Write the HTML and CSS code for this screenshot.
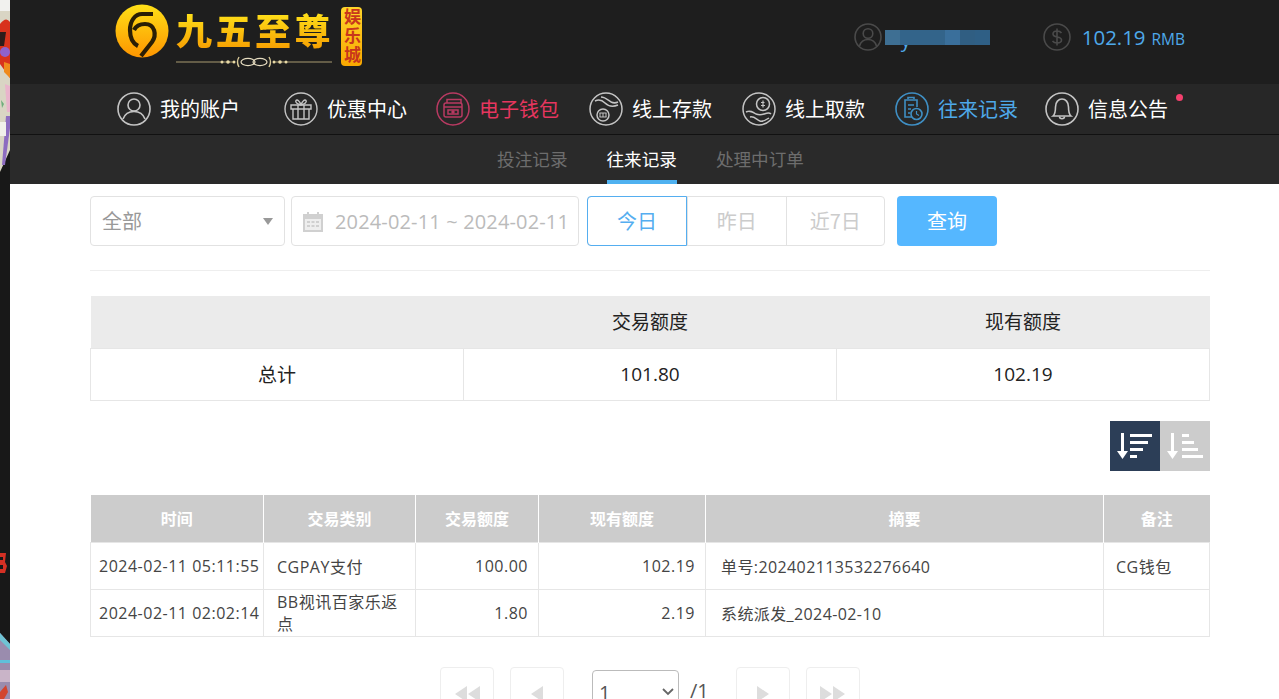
FILE: index.html
```html
<!DOCTYPE html>
<html lang="zh-CN">
<head>
  <meta charset="UTF-8" />
  <title>往来记录</title>
  <meta name="viewport" content="width=device-width, initial-scale=1.0" />
  <link rel="stylesheet" href="styles.css">
</head>
<body>
  <div class="strip">
    <svg width="10" height="699" viewBox="0 0 10 699">
      <rect width="10" height="699" fill="#181818"/>
      <path d="M0 0H10V150L0 172Z" fill="#d9d5c4"/>
      <rect width="10" height="11" fill="#f1f1ee"/>
      <path d="M0 24Q6 16 10 22V78L0 64Z" fill="#d8321c"/>
      <path d="M0 32H6L4 46H0Z" fill="#2e1c1a"/>
      <circle cx="5" cy="52" r="5" fill="#8f62cc"/>
      <path d="M4 62L10 64V78L4 72Z" fill="#ef8a1c"/>
      <path d="M5 84L10 86V112L7 112Z" fill="#e9b4cc"/>
      <path d="M1 100L4 104L2 108Z" fill="#6fae7c"/>
      <path d="M6 116H10V128L5 165H2Z" fill="#8d6cc0"/>
      <path d="M0 122H6V136H0Z" fill="#f1f0ea"/>
      <path d="M0 553H6L5 562L7 566L5 573H0V569H3V565H0V560H3V557H0Z" fill="#d43024"/>
      <path d="M0 633L10 644V699H0Z" fill="#9a8cae"/>
      <path d="M0 633L10 644V650L0 640Z" fill="#6fc3d4"/>
      <rect y="660" width="10" height="3" fill="#5fc0da"/>
      <rect y="670" width="10" height="12" fill="#c9b4c8"/>
      <path d="M0 692L6 685L8 692L4 699H0Z" fill="#d2452f"/>
    </svg>
  </div>

  <div class="main">
    <header class="top">
      <div class="logo">
        <svg class="logo-mark" width="54" height="54" viewBox="0 0 54 54">
          <defs>
            <linearGradient id="gold" x1="0" y1="0" x2="0" y2="1">
              <stop offset="0" stop-color="#ffe017"/>
              <stop offset="1" stop-color="#fd9500"/>
            </linearGradient>
          </defs>
          <circle cx="27" cy="27" r="26.5" fill="url(#gold)"/>
          <path d="M38 10H27C20 10 15 17 15 26C15 33 17 39 23 42" fill="none" stroke="#2a1e05" stroke-width="4.2"/>
          <path d="M26 52L37 38C42 31 40 20 30 20C25 20 21 22 19 26" fill="none" stroke="#2a1e05" stroke-width="4.2"/>
        </svg>
        <div class="logo-body">
          <span class="logo-name">九五至尊</span>
          <svg class="logo-rule" width="156" height="12" viewBox="0 0 156 12">
            <path d="M0 6H58M98 6H156" stroke="#a89a70" stroke-width="1"/>
            <circle cx="46" cy="6" r="1.500" fill="#e8d9a6"/>
            <circle cx="52" cy="6" r="1.800" fill="#e8d9a6"/>
            <circle cx="58" cy="6" r="1.500" fill="#e8d9a6"/>
            <circle cx="98" cy="6" r="1.500" fill="#e8d9a6"/>
            <circle cx="104" cy="6" r="1.800" fill="#e8d9a6"/>
            <circle cx="110" cy="6" r="1.500" fill="#e8d9a6"/>
            <path d="M63 1Q60 6 63 11M93 1Q96 6 93 11" fill="none" stroke="#d8c998" stroke-width="1.400"/>
            <ellipse cx="72" cy="6" rx="7" ry="3.600" fill="none" stroke="#e6dcc0" stroke-width="1.200"/>
            <ellipse cx="84" cy="6" rx="7" ry="3.600" fill="none" stroke="#e6dcc0" stroke-width="1.200"/>
          </svg>
        </div>
        <span class="logo-tag">娱乐城</span>
      </div>
      <div class="account">
        <svg class="acc-icon" width="28" height="28" viewBox="0 0 28 28" fill="none" stroke="#4a4a4a" stroke-width="1.600">
          <circle cx="14" cy="14" r="13"/>
          <circle cx="14" cy="10.500" r="4.800"/>
          <path d="M5.500 23C7 18 10 16.500 14 16.500S21 18 22.500 23"/>
        </svg>
        <div class="username">
          <span class="user-tail">y</span>
          <div class="mosaic">
            <i class="m1"></i><i class="m2"></i><i class="m3"></i><i class="m4"></i><i class="m5"></i>
          </div>
        </div>
        <svg class="acc-icon money-icon" width="28" height="28" viewBox="0 0 28 28" fill="none" stroke="#4a4a4a" stroke-width="1.600">
          <circle cx="14" cy="14" r="13"/>
          <path d="M18.500 10C17.500 8.500 16 8 14 8C11.500 8 10 9.200 10 11C10 15.500 18.500 12.500 18.500 17C18.500 19 16.500 20 14 20C12 20 10.500 19.300 9.500 18M14 5.500V22.500"/>
        </svg>
        <span class="balance">102.19</span>
        <span class="unit">RMB</span>
      </div>
    </header>

    <nav class="nav">
      <a class="nav-item first">
        <svg class="nav-icon" width="34" height="34" viewBox="0 0 34 34" fill="none" stroke="#c4c4c4" stroke-width="1.600">
          <circle cx="17" cy="17" r="16"/>
          <circle cx="17" cy="13" r="6"/>
          <path d="M6 27C8 21.500 12 19.500 17 19.500S26 21.500 28 27"/>
        </svg>
        <span>我的账户</span>
      </a>
      <a class="nav-item second">
        <svg class="nav-icon" width="34" height="34" viewBox="0 0 34 34" fill="none" stroke="#c4c4c4" stroke-width="1.400">
          <circle cx="17" cy="17" r="16"/>
          <path d="M7 13H27V17H7ZM9 17V27H25V17M14 13V27M20 13V27"/>
          <path d="M17 13C13 12 11 10 12 8.500S16 9 17 13C18 9 21 7 22 8.500S21 12 17 13Z"/>
        </svg>
        <span>优惠中心</span>
      </a>
      <a class="nav-item wallet">
        <svg class="nav-icon" width="34" height="34" viewBox="0 0 34 34" fill="none" stroke="#b93a62" stroke-width="1.500">
          <circle cx="17" cy="17" r="16"/>
          <rect x="8" y="11" width="18" height="14" rx="2"/>
          <path d="M11 11V7.500H25V11M8 15H26M12 18V22H22V18Z"/>
          <circle cx="17" cy="20" r="1" fill="#b93a62"/>
        </svg>
        <span>电子钱包</span>
      </a>
      <a class="nav-item">
        <svg class="nav-icon" width="34" height="34" viewBox="0 0 34 34" fill="none" stroke="#c4c4c4" stroke-width="1.500">
          <circle cx="17" cy="17" r="16"/>
          <path d="M6 9C10 7 13 8 16 11C19 14 24 15 29 13M12 5C16 5 19 8 22 10C24 11 27 11 29 10"/>
          <circle cx="14" cy="23" r="6"/>
          <path d="M11 21V25M14 21V25M17 21V25M10.500 21H17.500M10.500 25H17.500" stroke-width="1"/>
        </svg>
        <span>线上存款</span>
      </a>
      <a class="nav-item">
        <svg class="nav-icon" width="34" height="34" viewBox="0 0 34 34" fill="none" stroke="#c4c4c4" stroke-width="1.500">
          <circle cx="17" cy="17" r="16"/>
          <circle cx="21" cy="12" r="6.500"/>
          <path d="M21 8.500V15.500M19 10.500H22.500M19 13.500H23" stroke-width="1.200"/>
          <path d="M4 20C8 18 11 20 14 22C17 23 19 23 22 22C25 21 27 20 29 22M8 25C12 24 14 27 18 29C21 30 24 28 27 26"/>
        </svg>
        <span>线上取款</span>
      </a>
      <a class="nav-item active">
        <svg class="nav-icon" width="34" height="34" viewBox="0 0 34 34" fill="none" stroke="#3f8fc4" stroke-width="1.600">
          <circle cx="17" cy="17" r="16"/>
          <path d="M17 25H10V8H22V15M13 7V5.500H19V7M13 13H19M13 17H16M13 21H15"/>
          <circle cx="21.500" cy="22" r="5.500"/>
          <path d="M21.500 19V22L24 23.500" stroke-width="1.200"/>
        </svg>
        <span>往来记录</span>
      </a>
      <a class="nav-item">
        <svg class="nav-icon" width="34" height="34" viewBox="0 0 34 34" fill="none" stroke="#c4c4c4" stroke-width="1.600">
          <circle cx="17" cy="17" r="16"/>
          <path d="M8 24C10.500 22 10.500 19 10.500 15C10.500 10 13.500 7 17 7S23.500 10 23.500 15C23.500 19 23.500 22 26 24Z"/>
          <path d="M14.500 24.500C14.500 27.500 19.500 27.500 19.500 24.500"/>
        </svg>
        <span>信息公告</span>
        <i class="dot"></i>
      </a>
    </nav>

    <div class="subnav">
      <a>投注记录</a>
      <a class="on">往来记录</a>
      <a>处理中订单</a>
    </div>

    <div class="content">
      <div class="filters">
        <div class="field type-field">
          <span>全部</span>
          <i class="caret"></i>
        </div>
        <div class="field date-field">
          <svg width="22" height="21" viewBox="0 0 22 21" fill="#d0d0d0">
            <path d="M1 3H5V1H7V3H15V1H17V3H21V21H1Z"/>
            <path d="M3 8H19V19H3Z" fill="#eee"/>
            <path d="M5 10H8V12H5ZM9.500 10H12.500V12H9.500ZM14 10H17V12H14ZM5 14H8V16H5ZM9.500 14H12.500V16H9.500ZM14 14H17V16H14Z"/>
          </svg>
          <span>2024-02-11 ~ 2024-02-11</span>
        </div>
        <div class="range">
          <a class="on">今日</a>
          <a>昨日</a>
          <a>近7日</a>
        </div>
        <button class="search">查询</button>
      </div>

      <table class="summary">
        <tr>
          <th></th>
          <th>交易额度</th>
          <th>现有额度</th>
        </tr>
        <tr>
          <td>总计</td>
          <td>101.80</td>
          <td>102.19</td>
        </tr>
      </table>

      <div class="sorts">
        <a class="sort on">
          <svg width="38" height="30" viewBox="0 0 38 30" fill="#fff">
            <path d="M5 2H8V20H12L6.500 28L1 20H5Z"/>
            <path d="M14 3H36V6H14ZM14 10H32V13H14ZM14 17H27V20H14ZM14 24H21V27H14Z"/>
          </svg>
        </a>
        <a class="sort">
          <svg width="38" height="30" viewBox="0 0 38 30" fill="#fff">
            <path d="M5 2H8V20H12L6.500 28L1 20H5Z"/>
            <path d="M16 3H23V6H16ZM16 10H28V13H16ZM16 17H32V20H16ZM16 24H37V27H16Z"/>
          </svg>
        </a>
      </div>

      <table class="records">
        <thead>
          <tr>
            <th class="c-time">时间</th>
            <th class="c-type">交易类别</th>
            <th class="c-amount">交易额度</th>
            <th class="c-left">现有额度</th>
            <th class="c-note">摘要</th>
            <th>备注</th>
          </tr>
        </thead>
        <tbody>
          <tr>
            <td>2024-02-11 05:11:55</td>
            <td class="type">CGPAY支付</td>
            <td class="num">100.00</td>
            <td class="num">102.19</td>
            <td class="note">单号:202402113532276640</td>
            <td class="memo">CG钱包</td>
          </tr>
          <tr>
            <td>2024-02-11 02:02:14</td>
            <td class="type"><div class="clip">BB视讯百家乐返点</div></td>
            <td class="num">1.80</td>
            <td class="num">2.19</td>
            <td class="note">系统派发_2024-02-10</td>
            <td class="memo"></td>
          </tr>
        </tbody>
      </table>

      <div class="pager">
        <a class="page-btn"><svg width="26" height="16" viewBox="0 0 26 16" fill="#ddd"><path d="M13 0V16L1 8ZM26 0V16L14 8Z"/></svg></a>
        <a class="page-btn"><svg width="12" height="16" viewBox="0 0 12 16" fill="#ddd"><path d="M12 0V16L0 8Z"/></svg></a>
        <div class="page-select">
          <span>1</span>
          <svg width="12" height="8" viewBox="0 0 12 8" fill="none" stroke="#666" stroke-width="1.800"><path d="M1 1L6 6L11 1"/></svg>
        </div>
        <span class="page-total">/1</span>
        <a class="page-btn"><svg width="12" height="16" viewBox="0 0 12 16" fill="#ddd"><path d="M0 0V16L12 8Z"/></svg></a>
        <a class="page-btn"><svg width="26" height="16" viewBox="0 0 26 16" fill="#ddd"><path d="M0 0V16L12 8ZM13 0V16L25 8Z"/></svg></a>
      </div>
    </div>
  </div>
</body>
</html>
```

FILE: styles.css
```css
html, body {
  height: 100%;
}
body {
  margin: 0;
  display: flex;
  overflow: hidden;
  background: #fff;
  color: #333;
  font-family: "Open Sans", "Noto Sans CJK SC", sans-serif;
}
a {
  text-decoration: none;
}
.strip {
  width: 10px;
  flex: none;
}
.strip svg {
  display: block;
}
.main {
  flex: 1;
  min-width: 0;
}

/* top bar */
.top {
  height: 84px;
  background: #1e1e1e;
  display: flex;
  justify-content: space-between;
  padding: 0 94px 0 105px;
  box-sizing: border-box;
}
.logo {
  display: flex;
  align-items: flex-start;
}
.logo-mark {
  margin-top: 4px;
}
.logo-body {
  margin: 12px 0 0 7px;
  display: flex;
  flex-direction: column;
  width: 165px;
}
.logo-name {
  font-size: 36px;
  font-weight: 900;
  line-height: 40px;
  letter-spacing: 3.500px;
  white-space: nowrap;
  background: linear-gradient(#ffe21a, #f59a00);
  -webkit-background-clip: text;
  background-clip: text;
  color: transparent;
}
.logo-rule {
  margin-top: 4px;
}
.logo-tag {
  margin-top: 7px;
  width: 21px;
  height: 59px;
  border-radius: 4px;
  background: linear-gradient(#ffd52a, #f9a800);
  color: #c8361c;
  font-size: 17px;
  line-height: 21px;
  letter-spacing: 2px;
  writing-mode: vertical-rl;
  text-orientation: upright;
  text-align: center;
  font-weight: 700;
}
.account {
  display: flex;
  align-items: center;
  height: 74px;
}
.username {
  position: relative;
  width: 105px;
  margin: 0 53px 0 3px;
  height: 28px;
}
.user-tail {
  position: absolute;
  left: 16px;
  top: 3px;
  color: #4fa8e8;
  font-size: 20px;
}
.mosaic {
  position: absolute;
  left: 0;
  top: 7px;
  width: 105px;
  height: 15px;
  display: flex;
  background: #33658c;
}
.mosaic i {
  height: 100%;
}
.m1 { width: 15px; background: #3e6f93; }
.m2 { width: 45px; background: #33648a; }
.m3 { width: 15px; background: #3a6f9b; }
.m4 { width: 15px; background: #305e82; }
.m5 { width: 15px; background: #2f5f85; }
.balance {
  margin-left: 11px;
  color: #4ea9ea;
  font-size: 20.400px;
}
.unit {
  margin: 3px 0 0 6px;
  color: #4ea9ea;
  font-size: 15.500px;
}

/* main nav */
.nav {
  height: 51px;
  background: #272727;
  border-bottom: 1px solid #111;
  display: flex;
  align-items: center;
  padding-left: 107px;
  box-sizing: border-box;
}
.nav-item {
  position: relative;
  width: 153px;
  display: flex;
  align-items: center;
  gap: 9px;
  color: #fff;
  font-size: 20px;
  font-family: "Noto Sans CJK SC", sans-serif;
  line-height: 34px;
  flex: none;
}
.nav-item.first {
  width: 167px;
}
.nav-item.second {
  width: 152px;
}
.nav-item.wallet {
  color: #e6365f;
}
.nav-item.active {
  color: #4ea9ea;
  width: 150px;
}
.dot {
  position: absolute;
  left: 131px;
  top: 2px;
  width: 7px;
  height: 7px;
  border-radius: 50%;
  background: #f4406e;
}

/* sub nav */
.subnav {
  height: 49px;
  background: #2a2a2a;
  display: flex;
  justify-content: center;
  gap: 39px;
  padding-left: 12px;
  font-size: 17.600px;
  font-family: "Noto Sans CJK SC", sans-serif;
}
.subnav a {
  color: #6d6d6d;
  line-height: 48px;
  height: 49px;
  box-sizing: border-box;
}
.subnav a.on {
  color: #fff;
  border-bottom: 4px solid #4fb1f0;
}

/* content */
.content {
  padding: 12px 69px 0 80px;
}
.filters {
  display: flex;
  height: 50px;
  padding-bottom: 24px;
  border-bottom: 1px solid #eee;
}
.field {
  height: 50px;
  box-sizing: border-box;
  border: 1px solid #e2e2e2;
  border-radius: 4px;
  display: flex;
  align-items: center;
  color: #aaa;
  font-size: 20px;
  font-family: "Noto Sans CJK SC", sans-serif;
}
.type-field {
  width: 195px;
  padding: 0 11px 2px;
  justify-content: space-between;
  color: #999;
}
.caret {
  width: 0;
  height: 0;
  margin-top: 2px;
  border: 5px solid transparent;
  border-top: 7px solid #999;
  border-bottom: 0;
}
.date-field {
  width: 288px;
  margin-left: 6px;
  padding-left: 10px;
  gap: 11px;
  color: #bbb;
  white-space: nowrap;
  font-family: "Open Sans", sans-serif;
  font-size: 20px;
  letter-spacing: 0.150px;
}
.range {
  margin-left: 8px;
  display: flex;
  width: 298px;
  height: 50px;
  box-sizing: border-box;
  border: 1px solid #e2e2e2;
  border-radius: 4px;
  font-size: 20px;
  font-family: "Noto Sans CJK SC", sans-serif;
}
.range a {
  flex: 1;
  text-align: center;
  line-height: 47px;
  color: #ccc;
  border-left: 1px solid #e2e2e2;
}
.range a.on {
  color: #55aef0;
  border: 1px solid #55aef0;
  border-radius: 4px 0 0 4px;
  margin: -1px 0 -1px -1px;
  flex: none;
  width: 100px;
  box-sizing: border-box;
}
.search {
  margin-left: 12px;
  width: 100px;
  height: 50px;
  padding: 0 0 2px;
  border: none;
  border-radius: 4px;
  background: #55b7ff;
  color: #fff;
  font-size: 20px;
  font-family: "Noto Sans CJK SC", sans-serif;
}

.summary {
  margin-top: 25px;
  width: 100%;
  table-layout: fixed;
  border-collapse: collapse;
  font-size: 19px;
  color: #222;
}
.summary th {
  height: 52px;
  box-sizing: border-box;
  background: #ebebeb;
  font-weight: 400;
  padding: 0 0 2px;
}
.summary td {
  height: 52px;
  box-sizing: border-box;
  border: 1px solid #e6e6e6;
  text-align: center;
  padding: 0 0 1px;
}

.sorts {
  margin-top: 20px;
  display: flex;
  justify-content: flex-end;
}
.sort {
  width: 50px;
  height: 50px;
  background: #ccc;
  display: flex;
  align-items: center;
  justify-content: center;
}
.sort.on {
  background: #2c3e57;
}

.records {
  margin-top: 24px;
  width: 100%;
  table-layout: fixed;
  border-collapse: collapse;
  font-size: 16px;
  letter-spacing: 0.500px;
  color: #444;
}
.records th {
  height: 48px;
  box-sizing: border-box;
  background: #ccc;
  color: #fff;
  font-weight: 700;
  border-left: 1px solid #fff;
  padding: 0;
  letter-spacing: 0;
}
.records th:first-child {
  border-left: none;
}
.c-time { width: 173px; }
.c-type { width: 152px; }
.c-amount { width: 123px; }
.c-left { width: 167px; }
.c-note { width: 398px; }
.records td {
  height: 47px;
  box-sizing: border-box;
  padding: 0 0 0 8px;
  border: 1px solid #e6e6e6;
  white-space: nowrap;
}
.records td.type {
  padding-left: 13px;
  padding-right: 16px;
  white-space: normal;
}
.records td.num {
  text-align: right;
  padding: 0 10px 0 0;
}
.records td.note {
  padding-left: 15px;
  letter-spacing: 0.400px;
}
.records td.memo {
  padding-left: 12px;
}
.clip {
  max-height: 44px;
  line-height: 22px;
  overflow: hidden;
}

.pager {
  margin-top: 30px;
  display: flex;
  align-items: flex-start;
  padding-left: 350px;
}
.page-btn {
  width: 54px;
  height: 54px;
  box-sizing: border-box;
  border: 1px solid #eee;
  border-radius: 4px;
  margin-right: 16px;
  display: flex;
  align-items: center;
  justify-content: center;
}
.page-select {
  width: 87px;
  height: 44px;
  box-sizing: border-box;
  margin: 3px 0 0 12px;
  border: 1px solid #bbb;
  border-radius: 4px;
  display: flex;
  align-items: center;
  justify-content: space-between;
  padding: 0 4px 0 6px;
  font-size: 20px;
  color: #555;
}
.page-total {
  margin: 10px 27px 0 11px;
  font-size: 20px;
  color: #555;
}
```
